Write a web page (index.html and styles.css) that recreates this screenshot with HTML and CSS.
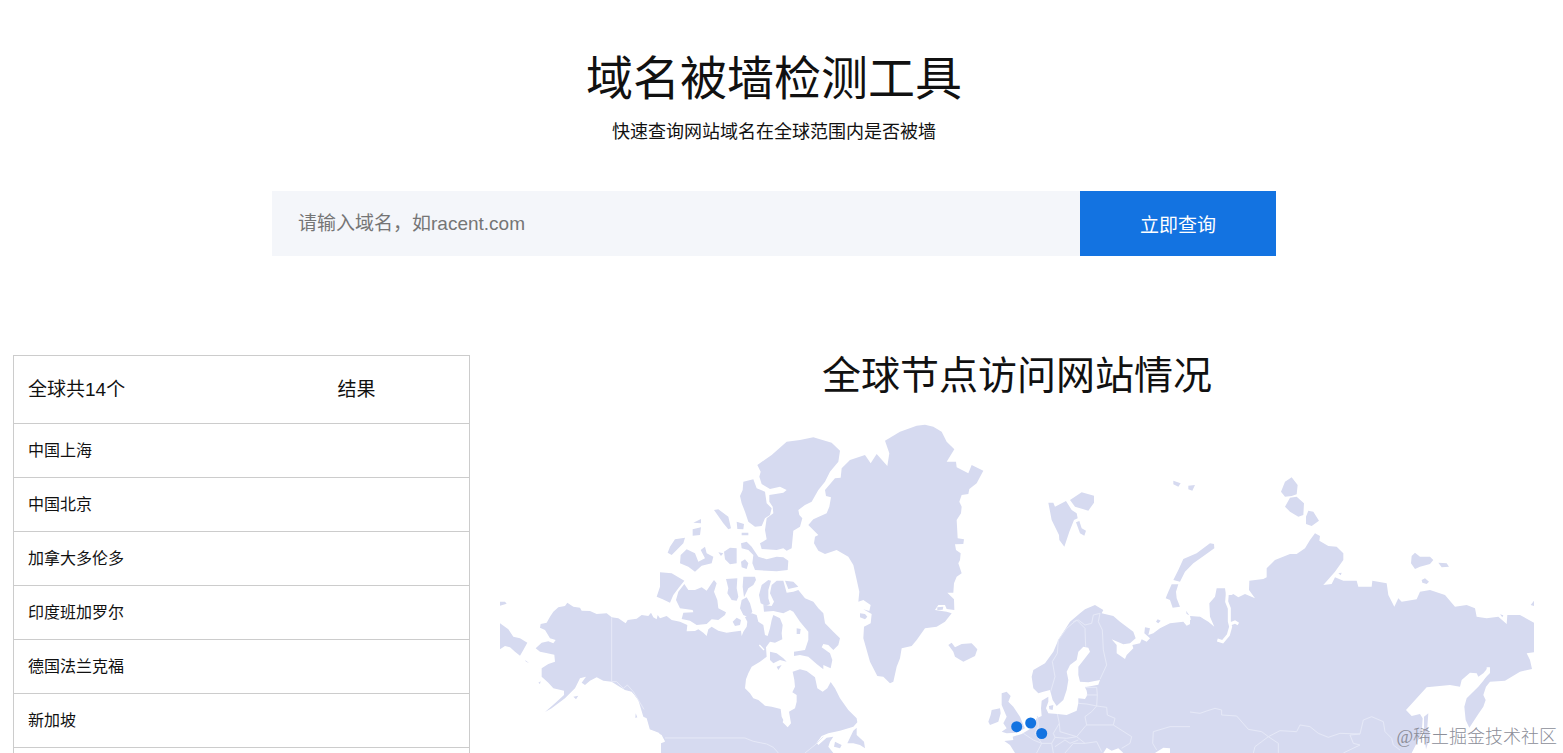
FILE: index.html
```html
<!DOCTYPE html>
<html lang="zh-CN">
<head>
    <meta charset="UTF-8">
    <meta name="viewport" content="width=device-width, initial-scale=1.0">
    <title>域名被墙检测工具</title>
    <link rel="stylesheet" href="styles.css">
</head>
<body>
    <header class="hero">
        <h1>域名被墙检测工具</h1>
        <p>快速查询网站域名在全球范围内是否被墙</p>
        <form class="search">
            <input type="text" class="search-input" aria-label="域名" placeholder="请输入域名，如racent.com">
            <button type="button" class="search-btn">立即查询</button>
        </form>
    </header>

    <main class="content">
        <table class="nodes">
            <thead>
                <tr><th class="col-node">全球共14个</th><th>结果</th></tr>
            </thead>
            <tbody>
                <tr><td>中国上海</td><td></td></tr>
                <tr><td>中国北京</td><td></td></tr>
                <tr><td>加拿大多伦多</td><td></td></tr>
                <tr><td>印度班加罗尔</td><td></td></tr>
                <tr><td>德国法兰克福</td><td></td></tr>
                <tr><td>新加坡</td><td></td></tr>
                <tr><td></td><td></td></tr>
            </tbody>
        </table>

        <section class="map-box">
            <h2>全球节点访问网站情况</h2>
            <svg class="map" viewBox="500 420 1034 333" aria-hidden="true">
                <!-- Alaska, Canada -->
                <g transform="translate(490 560) scale(.33333)">
                    <path class="land" d="M232,128 250,140 270,143 275,152 300,153 320,162 350,160 365,172 385,175 407,190 413,180 440,176 455,165 475,168 483,158 490,172 500,178 503,165 510,175 530,168 545,180 570,185 592,195 590,214 615,213 625,208 640,218 650,228 655,208 665,200 685,212 710,218 730,215 753,212 755,228 760,215 770,200 772,185 765,172 785,160 800,165 805,185 820,195 825,225 833,228 840,205 845,180 850,165 870,175 878,195 875,220 877,238 855,248 840,245 828,262 830,290 810,305 785,320 775,340 768,358 765,385 780,400 790,415 805,420 825,437 845,440 872,447 875,470 880,480 878,487 893,502 903,490 897,455 915,445 920,425 920,405 907,397 915,380 913,360 908,335 930,328 950,333 975,352 982,385 998,395 1012,385 1022,366 1035,385 1050,415 1075,450 1100,475 1102,487 1090,500 1050,512 1015,520 995,528 980,548 985,555 1010,533 1030,530 1020,545 1015,560 1030,579 H513 V550 L525,545 515,525 495,515 480,510 470,475 460,470 445,420 425,395 405,390 385,378 365,365 340,362 320,352 300,362 285,375 275,368 288,350 270,355 260,375 255,385 240,400 225,415 185,445 165,456 195,430 222,405 222,392 190,385 175,368 155,350 155,325 175,312 195,305 193,284 165,278 150,275 137,265 155,248 175,244 190,250 197,240 180,235 165,210 150,203 152,192 170,188 180,170 190,155 205,142 225,138Z"/>
                    <path class="land" d="M30,125 45,125 50,131 30,137ZM30,190 55,208 70,230 90,235 112,248 100,270 90,287 75,275 60,262 45,258 30,268ZM250,410 265,407 258,418ZM145,368 152,364 150,372ZM105,300 117,309 108,305Z"/>
                    <path class="land" d="M437,460 442,472 436,474Z"/>
                    <path class="water" d="M405,398 415,395 430,405 437,420 432,430 445,455 455,470M478,510 505,520 522,543M808,255 822,270"/>
                    <path class="border" d="M365,172V365L380,365 400,385 412,375 430,395 462,448M525,534H765L790,544 830,552 850,562 865,579M945,579 975,555 1000,530"/>
                </g>
                <g transform="translate(640 560) scale(.33333)">
                    <path class="land" d="M60,37 95,40 133,62 115,85 100,105 90,128 68,118 50,110 60,80ZM133,72 145,90 165,90 185,82 200,92 215,70 222,60 230,70 222,95 232,120 235,145 258,157 255,165 235,180 215,178 200,192 170,195 150,182 125,177 130,158 160,157 158,150 120,145 108,120 115,95ZM258,57 292,55 290,85 295,110 290,122 275,120 262,100 265,85ZM310,50 345,50 348,60 340,75 325,85 312,112 308,80ZM305,120 320,112 330,130 337,155 325,172 310,165 300,145ZM278,185 290,173 303,180 300,195 285,198ZM365,75 385,60 393,62 385,90 385,115 390,132 378,138 362,130 357,105Z"/>
                    <path class="land" d="M395,75 410,62 430,62 440,98 460,95 475,90 495,115 520,125 535,145 550,160 555,190 580,215 600,235 595,255 580,270 565,255 550,252 545,262 570,280 577,300 572,325 550,315 550,328 530,312 505,290 480,285 462,288 462,275 495,270 505,240 505,215 480,185 460,155 450,150 430,160 400,153 372,155 370,135 395,138 402,125 390,100ZM435,62 460,65 475,80 445,87ZM390,275 410,280 430,295 440,305 420,300 400,310 390,300ZM410,320 425,315 415,330ZM470,205 482,207 480,222 470,222ZM622,550 640,512 650,503 650,525 672,545 675,565 660,555 640,550ZM585,545 605,555 600,565 582,560Z"/>
                </g>
                <!-- Arctic islands -->
                <g transform="translate(640 420) scale(.33333)">
                    <path class="land" d="M520,52 575,68 600,92 595,125 570,155 555,185 535,210 515,245 495,255 475,270 478,285 487,295 480,320 460,332 455,385 440,392 430,385 410,390 365,387 360,370 380,358 375,330 380,295 400,280 398,260 388,245 388,225 430,218 440,210 420,200 390,207 365,192 358,170 362,155 352,135 395,105 440,65 480,60ZM310,185 340,178 350,205 375,215 380,250 395,265 390,285 375,295 365,318 345,320 325,305 315,275 305,250 300,228 308,210ZM222,270 235,268 265,290 273,325 265,328 250,310ZM290,305 312,312 310,328 292,327ZM305,338H325V346H305ZM160,308 183,297 183,310ZM158,328 183,322 180,345 158,347ZM90,380 105,358 135,353 130,370 110,390 95,405 83,398ZM122,405 140,388 165,400 175,425 195,415 182,390 195,380 200,400 220,410 215,430 185,437 165,455 145,440 120,430ZM252,395 270,383 290,385 290,430 270,433 255,418ZM235,397 250,400 243,408ZM303,425 315,418 325,430 320,447 305,442ZM303,370 320,365 335,380 355,410 380,418 410,410 430,412 445,422 443,450 410,454 345,450 337,430 340,405 325,390 305,385Z"/>
                </g>
                <!-- Greenland, Iceland -->
                <g transform="translate(800 410) scale(.33333)">
                    <path class="land" d="M350,47 375,44 400,50 425,65 440,95 463,118 440,155 468,155 470,172 505,190 515,165 550,182 530,220 508,237 505,252 485,255 478,275 485,290 483,310 470,330 473,385 492,388 490,402 465,403 468,420 482,430 480,450 475,460 485,490 470,500 462,520 460,548 442,548 462,568 463,600 440,597 435,585 415,585 405,600 440,605 455,610 435,635 410,650 375,655 350,690 335,708 305,715 300,745 290,770 280,815 270,820 250,800 232,798 210,755 200,720 190,685 192,650 212,640 215,612 190,598 208,603 212,585 190,570 175,575 178,545 168,500 160,465 145,440 110,420 75,432 55,422 42,400 45,380 55,375 25,345 40,328 80,310 88,290 93,262 78,258 75,240 105,205 122,203 125,175 150,150 195,135 212,160 230,132 262,168 268,130 255,92 300,65ZM180,610 195,612 202,620 195,628 180,622ZM412,592 430,590 428,599 412,600ZM445,705 455,698 465,712 485,702 515,700 532,718 525,738 490,755 465,740 460,725Z"/>
                </g>
                <!-- Svalbard, Novaya Zemlya, Severnaya Zemlya -->
                <g transform="translate(1030 460) scale(.33333)">
                    <path class="land" d="M55,128 70,128 75,140 108,123 125,150 140,160 143,175 132,180 118,215 103,260 88,240 87,225 65,180ZM120,120 155,97 192,107 192,128 175,152 135,140ZM138,187 148,183 155,205 168,212 163,227 150,220ZM430,62 452,70 445,80 430,73ZM475,77 495,75 487,92 475,88ZM785,52 803,75 800,103 785,108 765,110 753,95 765,65ZM780,113 800,110 822,130 820,165 805,170 780,155 765,140ZM835,152 850,155 867,182 845,198 828,192 828,170ZM540,250 552,252 553,265 525,285 490,310 465,335 450,365 430,360 445,330 460,297 500,280ZM425,373 445,373 438,395 440,415 450,440 428,443 420,420 407,415 415,395ZM383,478 392,482 385,490 378,485ZM468,452 478,466 470,462Z"/>
                </g>
                <!-- Europe -->
                <g transform="translate(970 580) scale(.33333)">
                    <path class="land" d="M375,75 400,90 395,100 430,108 450,125 490,155 497,175 480,190 460,193 425,178 440,195 440,220 465,237 470,225 490,205 487,195 510,190 515,178 530,185 540,175 523,160 525,142 540,145 535,165 550,160 570,145 600,130 640,125 650,137 665,130 660,108 690,110 710,125 710,519 H600 L600,505 580,503 555,519 H460 L445,505 425,512 410,503 400,519 H135 L120,495 103,483 130,480 128,470 155,462 175,450 190,440 200,415 215,408 213,385 215,362 235,350 235,365 228,385 235,400 262,402 290,405 320,392 325,370 325,355 345,357 352,345 350,332 345,322 385,314 390,300 355,307 330,305 325,285 325,260 345,235 360,215 355,203 340,200 325,215 320,240 300,255 290,275 295,300 290,330 280,360 260,378 248,360 240,330 220,335 205,340 190,325 185,290 190,270 225,250 250,215 265,180 300,125 330,100 345,88ZM95,340 110,335 122,348 115,365 130,380 150,410 158,430 165,445 140,458 110,460 95,455 110,445 100,430 110,410 95,375ZM65,390 90,385 92,400 85,425 60,435 55,425 62,405ZM237,378 250,375 248,390 238,388Z"/>
                    <path class="border" d="M242,335 255,290 247,245 262,220 265,180 290,145 320,120 345,145 347,200M310,125 325,120 345,135 365,130 370,105 390,100 385,125 397,150 400,210 410,255 390,298M345,322H380L382,345 350,345M382,345 380,378 350,372 325,370M380,378 410,382 412,405 435,415 430,435H350L345,410 365,395 380,378M262,402 268,430 270,455 320,470 345,440 350,435M430,435 485,470 480,490 455,505M268,430 250,460 255,472 290,475 320,470 345,490 380,485 395,515M202,408 205,440 195,460 215,490 245,490 255,472M245,490 250,519M255,500 285,480 300,490 325,480M285,519 310,490 345,490M160,460 190,480 215,490 200,519M710,393 670,408 668,440 600,440 550,455 548,490 560,510"/>
                </g>
                <!-- Siberia and the Far East -->
                <g transform="translate(1200 460) scale(.33333)">
                    <path class="land" d="M-30,480 0,470 25,485 43,500 30,470 28,430 45,410 50,385 75,385 78,405 95,405 100,402 115,412 135,402 165,415 147,390 148,362 190,357 200,352 200,325 225,300 270,282 290,282 315,265 330,240 345,220 360,228 358,242 385,258 410,260 430,280 430,300 405,335 370,375 395,372 405,352 430,362 470,362 475,380 515,380 517,362 560,370 565,405 583,440 595,415 605,425 650,418 660,395 690,390 735,405 765,440 800,435 825,445 830,470 860,475 895,470 920,492 922,465 960,465 1002,488 1002,577 980,580 990,600 996,627 960,635 915,662 870,665 858,680 850,705 857,720 850,740 835,762 808,803 797,780 793,740 800,715 835,680 850,662 865,640 865,622 850,640 835,650 830,640 810,638 785,660 780,680 750,675 680,682 650,715 618,750 635,768 660,762 668,775 665,820 650,850 635,879 H-30ZM672,770 685,760 682,800 690,830 678,868 672,820ZM645,278 660,290 690,290 700,300 690,312 660,320 645,327 633,310 635,288ZM715,308 740,310 747,320 725,322ZM665,360 675,355 687,365 680,372 667,368ZM415,340 425,338 422,346ZM992,435 1002,422 1002,438ZM900,463 910,466 907,472Z"/>
                    <path class="gulf" d="M82,400 80,425 88,445 88,485 92,500 85,525 68,545 52,540M90,492 105,486 115,492"/>
                    <path class="channel" d="M865,622 865,637 850,652 835,660 822,652"/>
                    <path class="border" d="M20,753 0,760 -30,756M20,753 45,745 65,750 65,765 110,768 145,808 185,815 205,830 240,812 290,815 300,795 330,800 355,820 385,832 420,820 480,822 490,780 515,770 550,785 555,815 575,835 580,855 600,870M205,830 185,845 165,860 160,879M205,830 235,850 235,879M480,822 450,825 460,850 480,855 430,879"/>
                </g>
                <circle class="dot" cx="1016.7" cy="726.7" r="5.5"/>
                <circle class="dot" cx="1030.7" cy="723" r="5.5"/>
                <circle class="dot" cx="1041.7" cy="733.5" r="5.5"/>
            </svg>
        </section>
    </main>

    <div class="watermark">@稀土掘金技术社区</div>
</body>
</html>
```
FILE: styles.css
```css
* {
    box-sizing: border-box;
}
body {
    margin: 0;
    height: 100vh;
    overflow: hidden;
    padding-right: 15px;
    background-color: #fff;
    color: #111;
    font-family: "Liberation Sans", "Noto Sans CJK SC", sans-serif;
}
h1, h2, p {
    margin: 0;
    font-weight: 400;
}
.hero {
    padding-top: 47px;
    text-align: center;
}
h1 {
    font-size: 47px;
    line-height: 64px;
}
.hero p {
    margin-top: 8px;
    font-size: 18px;
    line-height: 26px;
}
.search {
    display: flex;
    width: 65%;
    max-width: 1004px;
    height: 65px;
    margin: 46px auto 0;
}
.search-input {
    flex: 1;
    min-width: 0;
    padding: 0 26px;
    border: none;
    background-color: #f4f6fa;
    font: inherit;
    font-size: 19px;
}
.search-input::placeholder {
    color: #757575;
}
.search-btn {
    width: 196px;
    border: none;
    background-color: #1373e1;
    color: #fff;
    font: inherit;
    font-size: 19px;
    cursor: pointer;
}
.content {
    display: grid;
    grid-template-columns: 457fr 1034fr;
    gap: 30px;
    align-items: start;
    margin-top: 99px;
    padding: 0 14px 0 13px;
}
.nodes {
    width: 100%;
    border: 1px solid #ccc;
    border-collapse: collapse;
    table-layout: fixed;
}
.nodes tr {
    border-bottom: 1px solid #ccc;
}
.nodes th,
.nodes td {
    height: 54px;
    padding: 0 14px 4px;
    text-align: left;
    font-size: 16px;
    font-weight: 400;
}
.nodes th {
    height: 68px;
    font-size: 19px;
}
.nodes .col-node {
    width: 68%;
}
h2 {
    font-size: 39px;
    line-height: 42px;
    text-align: center;
}
.map {
    display: block;
    width: 100%;
    margin-top: 23px;
}
.land {
    fill: #d6daf0;
}
.border {
    fill: none;
    stroke: #e6e9f7;
    stroke-width: 3;
}
.water {
    fill: none;
    stroke: #fff;
    stroke-width: 4;
}
.gulf {
    fill: none;
    stroke: #fff;
    stroke-width: 9;
}
.channel {
    fill: none;
    stroke: #fff;
    stroke-width: 10;
}
.dot {
    fill: #1373e1;
}
.watermark {
    position: absolute;
    right: 6px;
    bottom: 3px;
    color: #8c8e99;
    font-family: "Liberation Serif", "Noto Sans CJK SC", serif;
    font-size: 18px;
    font-weight: 300;
    line-height: 26px;
}
```
